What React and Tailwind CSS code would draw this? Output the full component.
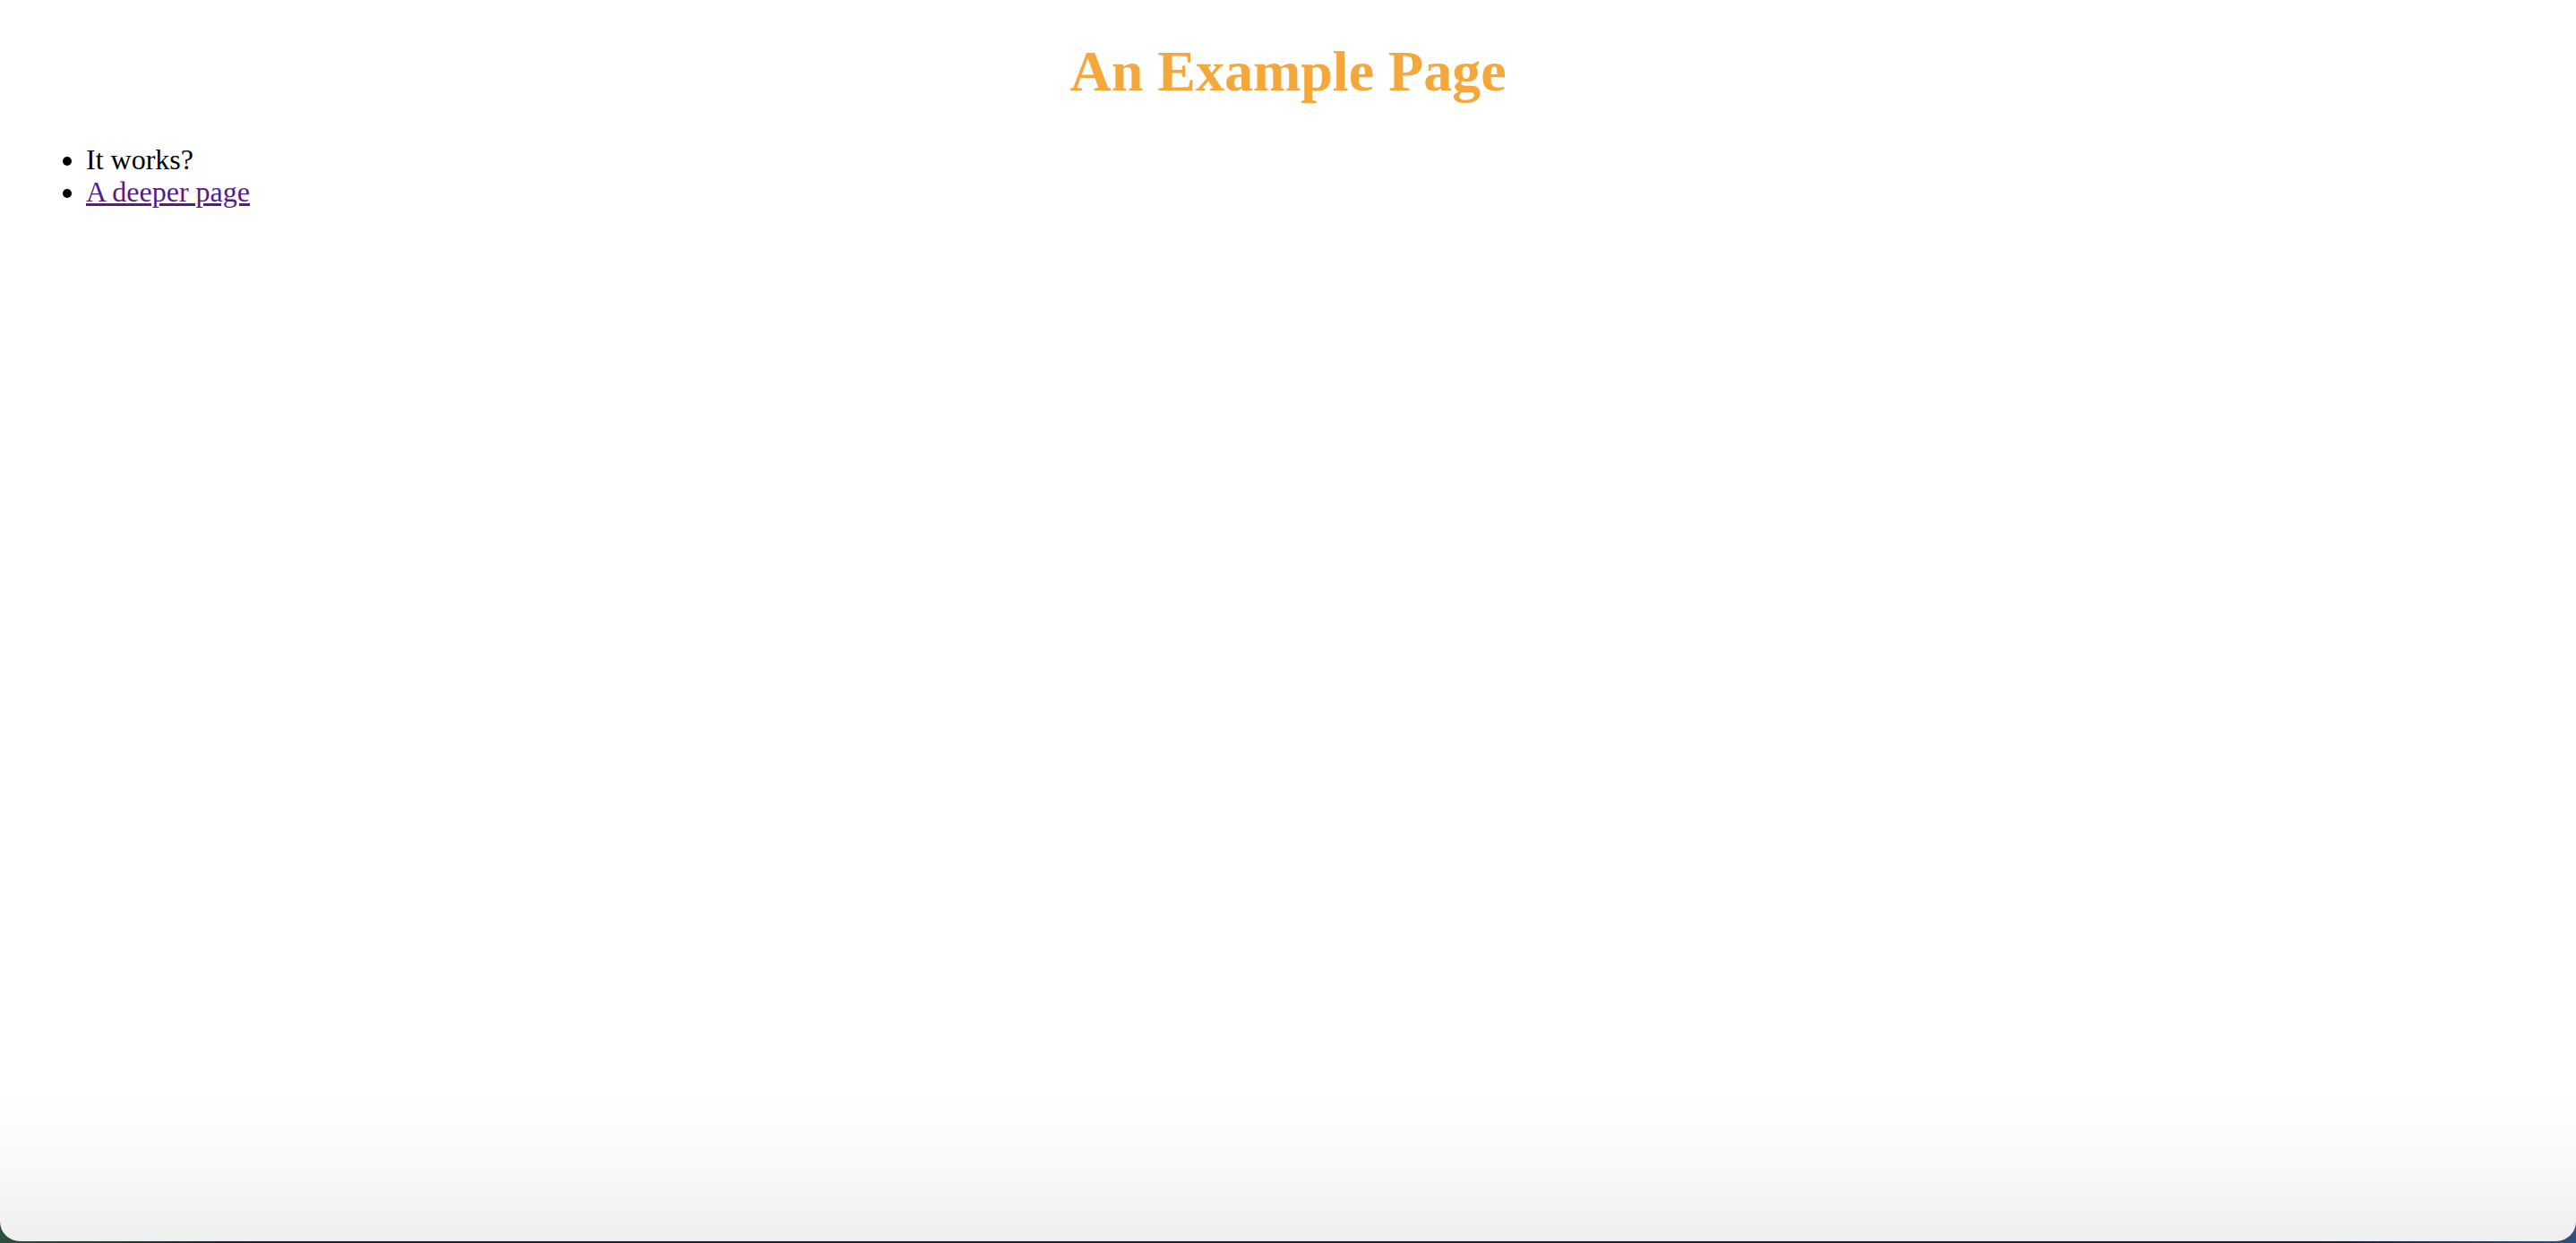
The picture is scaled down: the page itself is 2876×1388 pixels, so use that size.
export default function App() {
  return (
    <div className="h-[1388px] w-full overflow-hidden bg-[linear-gradient(90deg,#2f4d3c_0%,#1a2232_10%,#1a2232_90%,#2c5180_100%)]">
      <div className="h-[1386px] w-full rounded-b-[22px] bg-[linear-gradient(180deg,#ffffff_0%,#ffffff_88%,#f9f9f9_94%,#eeeeee_100%)] overflow-hidden font-['Liberation_Serif',serif] text-black">
        <h1 className="pt-[43px] text-center text-[64px] leading-[73.6px] font-bold text-[#f4a73b]">
          An Example Page
        </h1>
        <ul className="mt-[43px] list-disc pl-[96px] text-[32px] leading-[36.8px]">
          <li>It works?</li>
          <li>
            <a href="#" className="text-[#551a8b] underline">A deeper page</a>
          </li>
        </ul>
      </div>
    </div>
  );
}
